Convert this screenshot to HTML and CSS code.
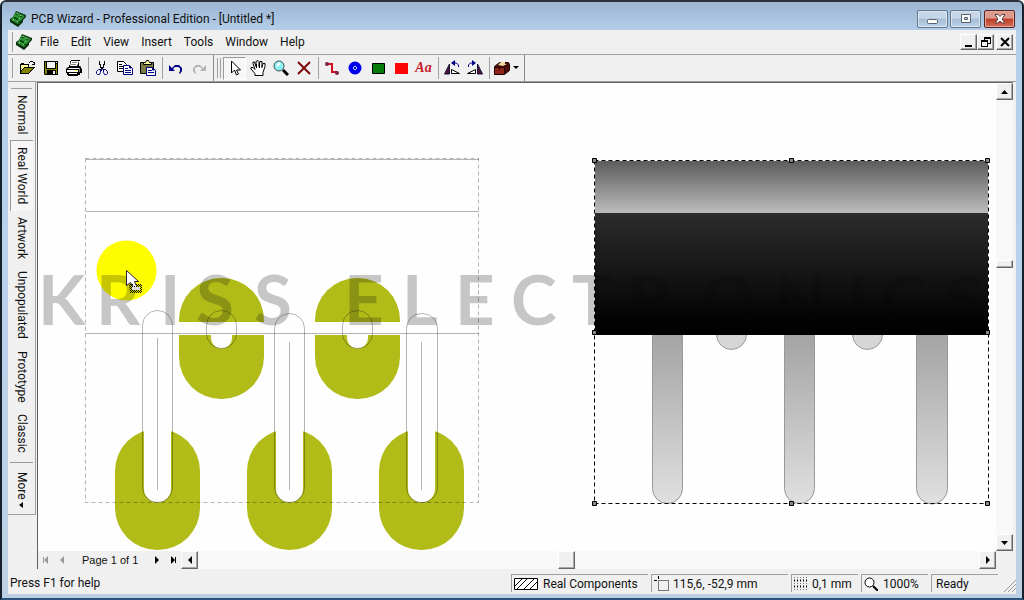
FILE: index.html
```html
<!DOCTYPE html>
<html lang="en">
<head>
<meta charset="utf-8">
<title>PCB Wizard - Professional Edition - [Untitled *]</title>
<link rel="stylesheet" href="styles.css">
</head>
<body>
<svg class="defs" aria-hidden="true">
  <symbol id="board" viewBox="0 0 16 16">
    <path fill="#0a300c" d="M6 0l10 4v2l-3 3v2l-5 5-8-5V8l3-2z"/>
    <path fill="#2c9236" d="M6 1l9 4-7 8-7-4z"/>
    <path fill="#0a4a10" d="M6 3h2v1H6zM4 6h2v1h2v2H6V8H4zM10 5h2v1h-2zM8 10h2v1H8z"/>
    <path fill="#9fd08c" d="M7 2h1v1H7zM10 4h1v1h-1zM3 8h1v1H3zM7 10h1v1H7zM9 7h1v1H9z"/>
  </symbol>
</svg>
<div class="window">
  <header class="titlebar">
    <svg class="icon" aria-hidden="true"><use href="#board"/></svg>
    <h1 class="title">PCB Wizard - Professional Edition - [Untitled *]</h1>
    <div class="caption-buttons">
      <button class="caption" aria-label="Minimize"><svg width="14" height="12"><rect x="1.5" y="6.500" width="10" height="4" rx="1" fill="#fff" stroke="#59636e"/></svg></button>
      <button class="caption" aria-label="Maximize"><svg width="14" height="12"><path fill="#fff" fill-rule="evenodd" stroke="#59636e" d="M2.500 1.500h9v8h-9zM5.500 4.500h3v2h-3z"/></svg></button>
      <button class="caption close" aria-label="Close"><svg width="14" height="12"><path fill="#fff" stroke="#57423f" d="M2 1.500h3l2 2 2-2h3L9 6l3 4H9L7 8l-2 2H2l3-4z"/></svg></button>
    </div>
  </header>

  <div class="client">
    <nav class="menubar">
      <span class="grip"></span>
      <svg class="icon" aria-hidden="true"><use href="#board"/></svg>
      <div class="menus">
        <button class="menu">File</button><button class="menu">Edit</button><button class="menu">View</button><button class="menu">Insert</button><button class="menu">Tools</button><button class="menu">Window</button><button class="menu">Help</button>
      </div>
      <div class="mdi-buttons">
        <button class="raised mdi" aria-label="Minimize document"><svg width="12" height="12"><path d="M2 9h7v2H2z"/></svg></button>
        <button class="raised mdi" aria-label="Restore document"><svg width="12" height="12"><path fill-rule="evenodd" d="M4 1h7v7H8v3H1V4h3zM5 3v1h3v3h2V3zM2 6v4h5V6z"/></svg></button>
        <button class="raised mdi last" aria-label="Close document"><svg width="12" height="12"><path fill="none" stroke="#000" stroke-width="2" d="M2 2l8 8M10 2l-8 8"/></svg></button>
      </div>
    </nav>

    <div class="toolbars">
      <div class="toolbar" role="toolbar" aria-label="Standard">
        <span class="grip"></span>
        <button class="tool" aria-label="Open"><svg class="icon"><path fill="#000" d="M0 4h1V3h3v1h5v3h6v1h-1v1h-1v1h-1v1h-1v1h-1v1h-1v1H0z"/><path fill="#ffff9c" d="M1 5h7v2H4v1H3v1H2v1H1z"/><path fill="#848200" d="M4 8h9v1h-1v1h-1v1h-1v1H9v1H1v-1l1-1v-1h1V9h1z"/><path fill="none" stroke="#000" d="M9 2.500h1M10 1.500h3M13 2.500h1M14.500 2v3M12 4.500h2"/></svg></button>
        <button class="tool" aria-label="Save"><svg class="icon"><path d="M1 1h14v14H2l-1-1z"/><path fill="#848200" d="M2 2h1v7h10V4h1v10H2z"/><path fill="#f4f4f4" d="M4 2h8v6H4zM10 11h2v3h-2z"/><path fill="#f4f4f4" d="M13 2h1v1h-1z"/><path d="M4 10h9v4h-1v-3h-2v3H4z"/></svg></button>
        <button class="tool" aria-label="Print"><svg class="icon"><path d="M5 0h9v1h-1v5h1l1 1v1l1 1v4h-2v2h-2v1H2v-1H1v-2H0V9l2-2h1V5h1V1h1z"/><path fill="#fff" d="M5 1h8L11 6H4zM3 8h10v1H2zM1 10h11v2H1zM3 13h8v1H3z"/><path fill="#848484" d="M6 2h5v1H6zM5 4h5v1H5zM13 8h1v4h-1z"/><path fill="#ff0" d="M9 10h2v1H9z"/></svg></button>
        <span class="sep"></span>
        <button class="tool" aria-label="Cut"><svg class="icon"><path fill="none" stroke="#000" d="M5.500 1v4M10.500 1v4M6.500 4v4M9.500 4v4M7.500 7v4M8.500 7v2"/><path fill="none" stroke="#000084" d="M7.500 9.500h-3l-2 2v2l1 1h2l1-2v-3M8.500 9.500h3l2 2v2l-1 1h-2l-1-2v-3"/></svg></button>
        <button class="tool" aria-label="Copy"><svg class="icon"><path fill="#fff" stroke="#000" d="M.5 1.500h6l3 3v7h-9z"/><path stroke="#000" d="M2 4.500h3M2 6.500h5M2 8.500h5"/><path fill="#fff" stroke="#000084" d="M6.500 5.500h6l3 3v6h-9z"/><path stroke="#000084" d="M8 8.500h3M8 10.500h6M8 12.500h6M12.500 6v2h2"/></svg></button>
        <button class="tool" aria-label="Paste"><svg class="icon"><path fill="#7c7b42" stroke="#000" d="M.5 2.500h13v11h-13z"/><path fill="#ffff9c" stroke="#000" d="M3.500 4.500v-2h2l1-2h2l1 2h2v2z"/><path fill="#fff" stroke="#000084" d="M6.500 7.500h6l3 3v5h-9z"/><path stroke="#000084" d="M8 10.500h4M8 12.500h6M12.500 8v2h2"/></svg></button>
        <span class="sep"></span>
        <button class="tool" aria-label="Undo"><svg class="icon"><path fill="#000084" d="M1 5v6h6L5 9l2-2h3l2 1v3l-1 2 1 1 2-3V8l-3-3H7L4 8z"/></svg></button>
        <button class="tool" aria-label="Redo" disabled><svg class="icon"><path fill="#b4b4b4" d="M15 5v6H9l2-2-2-2H6L4 8v3l1 2-1 1-2-3V8l3-3h4l3 3z"/></svg></button>
      </div>
      <div class="toolbar second" role="toolbar" aria-label="Drawing">
        <span class="grip double"></span>
        <button class="tool pressed" aria-label="Select"><svg class="icon"><path fill="#fff" stroke="#000" d="M4.500 1v12l3-3 2 5 2-1-2-4h4z"/></svg></button>
        <button class="tool" aria-label="Pan"><svg class="icon"><path fill="#fff" stroke="#000" d="M5 15.500v-2L1 9V7.500h2l2 2-2-6V2h1.500L6 6.500V1.500L8 .5l1 1v5l1-5h2v5l1-3h2v3l-2 6v3z"/><path stroke="#000" d="M6.500 4v4M9.500 4v4M12 5v3"/></svg></button>
        <button class="tool" aria-label="Zoom"><svg class="icon"><path stroke="#000" stroke-width="3" d="M10 10l5 5"/><circle cx="6" cy="6" r="5" fill="#8df2f4" stroke="#40525a"/><path stroke="#fff" stroke-width="2" d="M4 6l3-3"/></svg></button>
        <button class="tool" aria-label="Delete"><svg class="icon"><path fill="none" stroke="#780c0c" stroke-width="2" d="M2 2l12 12M14 2L2 14"/></svg></button>
        <span class="sep"></span>
        <button class="tool" aria-label="Track"><svg class="icon"><path fill="none" stroke="#d01020" stroke-width="2" d="M2 4h6v8h6"/><circle cx="3" cy="4" r="2" fill="#84204c"/><circle cx="13" cy="13" r="2" fill="#84204c"/></svg></button>
        <button class="tool" aria-label="Pad"><svg class="icon"><circle cx="8" cy="8" r="6.500" fill="#0000f0"/><path fill="#b8dcff" d="M7 6h2v1h1v2H9v1H7V9H6V7h1z"/><path fill="#0000a0" d="M7 7h2v2H7z"/></svg></button>
        <button class="tool" aria-label="Component"><svg class="icon"><path fill="#087a08" stroke="#000" d="M2.500 3.500h12v10h-12z"/></svg></button>
        <button class="tool" aria-label="Copper area"><svg class="icon"><path fill="#fa0606" d="M2 3h13v11H2z"/></svg></button>
        <button class="tool text-tool" aria-label="Text">Aa</button>
        <span class="sep"></span>
        <button class="tool" aria-label="Rotate left"><svg class="icon"><path fill="#54103c" stroke="#101030" d="M5.500 4v10H.5z"/><path fill="#fff" stroke="#000" d="M7.500 9.500v4h8z"/><path fill="none" stroke="#000084" d="M14.500 7V5l-2-2H8"/><path fill="#000084" d="M11 0v6L7 3z"/></svg></button>
        <button class="tool" aria-label="Rotate right"><svg class="icon"><path fill="#54103c" stroke="#101030" d="M10.500 4v10h5z"/><path fill="#fff" stroke="#000" d="M8.500 9.500v4h-8z"/><path fill="none" stroke="#000084" d="M1.500 7V5l2-2H8"/><path fill="#000084" d="M5 0v6l4-3z"/></svg></button>
        <span class="sep"></span>
        <button class="tool gallery" aria-label="Component gallery"><svg class="icon"><path fill="#4c0c0c" stroke="#200" d="M.5 6.500l5-4h9l1 2v6l-5 4H.5z"/><path fill="#8c2418" d="M1 8h9v6H1z"/><path fill="#f4d8a0" d="M4 5l3-3h4v2h2L9 6z"/><path fill="none" stroke="#200" d="M10.500 14V7l4-3M1 7.500h9M5.500 8v2"/></svg><svg width="6" height="4"><path d="M0 0h6L3 3z"/></svg></button>
      </div>
    </div>

    <div class="workspace">
      <nav class="views">
        <button class="view">Normal</button>
        <button class="view active">Real World</button>
        <button class="view">Artwork</button>
        <button class="view">Unpopulated</button>
        <button class="view">Prototype</button>
        <button class="view">Classic</button>
        <button class="view more">More<svg width="5" height="6"><path d="M4 0v6L0 3z"/></svg></button>
      </nav>
      <main class="document">
        <div class="canvas">
          <svg class="drawing" role="img" aria-label="Circuit layout and component view">
            <defs>
              <linearGradient id="metal" x2="0" y2="1"><stop stop-color="#5c5c5c"/><stop offset="1" stop-color="#bcbcbc"/></linearGradient>
              <linearGradient id="body" x2="0" y2="1"><stop stop-color="#2c2c2c"/><stop offset=".9" stop-color="#020202"/><stop offset="1" stop-color="#000"/></linearGradient>
              <linearGradient id="pin" x2="0" y2="1"><stop stop-color="#a2a2a2"/><stop offset="1" stop-color="#e0e0e0"/></linearGradient>
              <linearGradient id="ink" gradientUnits="userSpaceOnUse" x1="594" x2="595" y1="0" y2="0"><stop stop-opacity=".22"/><stop offset="1" stop-opacity=".16"/></linearGradient>
              <pattern id="dither" width="2" height="2" patternUnits="userSpaceOnUse"><path d="M0 0h1v1H0zM1 1h1v1H1z"/></pattern>
            </defs>
            <g transform="translate(-38 -83)">
              <g fill="#b1bc18">
                <rect x="179" y="278" width="85" height="121" rx="42"/>
                <rect x="315" y="278" width="85" height="121" rx="42"/>
                <rect x="115" y="429" width="85" height="121" rx="42"/>
                <rect x="247" y="429" width="85" height="121" rx="42"/>
                <rect x="379" y="429" width="85" height="121" rx="42"/>
              </g>
              <g fill="#fefefe">
                <path d="M178 322h88v13h-88zM314 322h88v13h-88z"/>
                <path d="M211 334h21v4a10.500 10.500 0 0 1-21 0zM347 334h21v4a10.500 10.500 0 0 1-21 0z"/>
                <path d="M144 428h27v61a13.500 13.500 0 0 1-27 0zM276 428h27v61a13.500 13.500 0 0 1-27 0zM408 428h27v61a13.500 13.500 0 0 1-27 0z"/>
              </g>
              <g fill="none" stroke="#000" stroke-opacity=".29">
                <rect x="142.500" y="310.500" width="30" height="192" rx="15"/>
                <rect x="274.500" y="313.500" width="30" height="189" rx="15"/>
                <rect x="406.500" y="313.500" width="31" height="189" rx="15"/>
                <rect x="206.500" y="310.500" width="30" height="38" rx="15"/>
                <rect x="342.500" y="310.500" width="30" height="38" rx="15"/>
                <path d="M157.500 338v152M289.500 342v148M421.500 342v148"/>
                <path d="M86 159.500h393M86 211.500h393M86 333.500h393"/>
                <path stroke-dasharray="4 3" d="M85.500 158.500h393v344h-393z"/>
              </g>
              <circle cx="126.500" cy="270.500" r="30" fill="#fdfd00"/>
              <g stroke="#999" fill="url(#pin)">
                <path d="M652.500 330v158.500a15 15 0 0 0 30 0V330zM784.500 330v158.500a15 15 0 0 0 30 0V330zM916.500 330v158.500a15 15 0 0 0 31 0V330z"/>
                <g fill="#d6d6d6"><circle cx="731.500" cy="334.500" r="15"/><circle cx="867.500" cy="334.500" r="15"/></g>
              </g>
              <rect x="595" y="161" width="393" height="52" fill="url(#metal)"/>
              <rect x="595" y="213" width="393" height="122" fill="url(#body)"/>
              <path fill="none" stroke="#fff" d="M594.500 160.500h394v174M594.500 335V160"/>
              <path fill="none" stroke="#000" stroke-dasharray="4 3" d="M594.500 160.500h394v343h-394z"/>
              <text class="watermark" y="325" x="38 96 160 196 254 344 402 455 511 572 627 701 774 848 881 946">KRISSELECTRONICS</text>
              <g fill="#888" stroke="#000">
                <path d="M592.500 158.500h4v4h-4zM789.500 158.500h4v4h-4zM985.500 158.500h4v4h-4zM592.500 330.500h4v4h-4zM985.500 330.500h4v4h-4zM592.500 501.500h4v4h-4zM789.500 501.500h4v4h-4zM985.500 501.500h4v4h-4z"/>
              </g>
              <path fill="#fff" stroke="#302038" d="M126.500 270.500v15l4-3 4 7 3-1-3-7h4z"/>
              <path fill="url(#dither)" d="M129 284h4v2h3v-2h6v9h-12z"/>
              <path fill="#ddd" d="M132 287h8v3h-8z"/>
            </g>
          </svg>
        </div>
        <div class="vscroll">
          <button class="raised arrow" aria-label="Scroll up"><svg width="8" height="4"><path d="M0 4h7L3.500 0z"/></svg></button>
          <span class="track"></span><span class="raised thumb"></span><span class="track low"></span>
          <button class="raised arrow" aria-label="Scroll down"><svg width="8" height="4"><path d="M0 0h7L3.500 4z"/></svg></button>
        </div>
        <div class="bottombar">
          <div class="pager">
            <button class="page-btn" aria-label="First page" disabled><svg width="8" height="8"><path d="M1 1h1v6H1zM6 0v8L2 4z"/></svg></button>
            <button class="page-btn" aria-label="Previous page" disabled><svg width="8" height="8"><path d="M6 0v8L2 4z"/></svg></button>
            <span class="page-label">Page 1 of 1</span>
            <button class="page-btn" aria-label="Next page"><svg width="8" height="8"><path d="M2 0v8l4-4z"/></svg></button>
            <button class="page-btn" aria-label="Last page"><svg width="8" height="8"><path d="M6 1h1v6H6zM2 0v8l4-4z"/></svg></button>
          </div>
          <div class="hscroll">
            <button class="raised arrow" aria-label="Scroll left"><svg width="8" height="8"><path d="M6 0v8L2 4z"/></svg></button>
            <span class="track left"></span><span class="raised thumb"></span><span class="track"></span>
            <button class="raised arrow" aria-label="Scroll right"><svg width="8" height="8"><path d="M2 0v8l4-4z"/></svg></button>
          </div>
        </div>
      </main>
    </div>

    <footer class="statusbar">
      <span class="help">Press F1 for help</span>
      <div class="panels">
        <span class="panel wide"><svg width="24" height="12"><path fill="#fff" stroke="#000" d="M.5.5h23v11H.5z"/><path stroke="#000" d="M1 8l7-7M3 11L13 1M10 11L20 1M16 11l7-7"/></svg>Real Components</span>
        <span class="panel wide coords"><svg width="16" height="16"><path fill="none" stroke="#000" stroke-dasharray="1 1" d="M4.500 4.500h10v10h-10z"/><path fill="none" stroke="#000" d="M4.500 0v3M0 4.500h3"/></svg>115,6, -52,9 mm</span>
        <span class="panel"><svg width="13" height="13"><path stroke="#000" stroke-dasharray="1 2" d="M0 .5h13M0 3.500h13M0 6.500h13M0 9.500h13M0 12.500h13"/><path stroke="#777" stroke-dasharray="1 1" d="M.5 0v13M3.500 0v13M6.500 0v13M9.500 0v13M12.500 0v13"/></svg>0,1 mm</span>
        <span class="panel"><svg width="14" height="14"><circle cx="5.500" cy="5.500" r="4.500" fill="#fff" stroke="#000"/><path stroke="#000" stroke-width="2" d="M9 9l5 5"/></svg>1000%</span>
        <span class="panel">Ready</span>
      </div>
      <svg class="resize" width="12" height="12" aria-hidden="true"><path stroke="#989898" stroke-width="1" d="M0 12L12 0M4 12l8-8M8 12l4-4"/></svg>
    </footer>
  </div>
</div>
</body>
</html>
```
FILE: styles.css
```css
* { box-sizing: border-box; }

body {
  margin: 0;
  font-family: Roboto, "Noto Sans", sans-serif;
  font-size: 12px;
  line-height: 16px;
  color: #111;
}

button {
  margin: 0;
  padding: 0;
  border: 0;
  background: none;
  font: inherit;
  color: inherit;
}

svg { display: block; flex: none; }
.defs { width: 0; height: 0; position: absolute; }
.icon { width: 16px; height: 16px; }

/* Window frame */
.window {
  min-height: 100vh;
  display: flex;
  flex-direction: column;
  padding: 0 6px 4px;
  background: linear-gradient(#9cb5d3, #b6cfe9 30px, #b9d1ea 60%, #bdd0e2);
  border: 2px solid #15202c;
  border-top-color: #2f2f3a;
  border-bottom-color: #2d527c;
  border-radius: 6px 6px 0 0;
}

.titlebar {
  height: 28px;
  display: flex;
  align-items: center;
  gap: 5px;
  padding: 5px 0 0 2px;
}

.title {
  flex: 1;
  margin: 0;
  font-size: 12px;
  font-weight: 400;
}

.caption-buttons { display: flex; gap: 2px; padding-right: 1px; }

.caption {
  width: 31px;
  height: 18px;
  display: grid;
  place-items: center;
  border: 1px solid #62788f;
  border-radius: 2px;
  background: linear-gradient(#c6d6e8 45%, #a5bcd5 50%, #bed2e7);
  box-shadow: inset 0 0 0 1px #dbe6f2;
}

.caption.close {
  margin-left: 1px;
  border-color: #5a2420;
  background: linear-gradient(#dc9a8c 45%, #bf3b26 50%, #d2705a);
  box-shadow: inset 0 0 0 1px #e5a79b;
}

.client {
  flex: 1;
  display: flex;
  flex-direction: column;
  background: #f0f0f0;
}

/* Menu and toolbars */
.menubar {
  height: 25px;
  display: flex;
  align-items: center;
  padding: 0 3px 0 3px;
  border-bottom: 1px solid #a0a0a0;
}

.grip {
  width: 2px;
  height: 20px;
  margin-right: 3px;
  border-right: 1px solid #a0a0a0;
}

.grip.double {
  width: 4px;
  margin-right: 2px;
  border-left: 1px solid #a0a0a0;
}

.menus { flex: 1; display: flex; padding-left: 2px; }
.menu { padding: 0 6px; }
.mdi-buttons { display: flex; }

.raised {
  border: 1px solid;
  border-color: #fff #666 #666 #fff;
  box-shadow: inset -1px -1px 0 #a8a8a8;
  background: #f0f0f0;
}

.mdi {
  width: 17px;
  height: 16px;
  display: grid;
  place-items: center;
}

.mdi.last { margin-left: 2px; }

.toolbars { display: flex; height: 26px; }

.toolbar {
  display: flex;
  align-items: center;
  padding: 0 3px;
}

.toolbar.second {
  border-left: 1px solid #888;
  border-right: 1px solid #888;
}

.tool {
  width: 23px;
  height: 23px;
  display: grid;
  place-items: center;
}

.tool.pressed {
  border: 1px solid;
  border-color: #999 #fff #fff #999;
  background: #f7f7f7;
}

.sep {
  width: 4px;
  height: 22px;
  border-right: 1px solid #a0a0a0;
  margin-right: 1px;
}

.text-tool {
  font: italic bold 14px/16px "Liberation Serif", serif;
  color: #c81c28;
}

.tool.gallery {
  width: 30px;
  display: flex;
  align-items: center;
  justify-content: center;
  gap: 3px;
}

/* Work area */
.workspace {
  flex: 1;
  display: flex;
  padding-right: 3px;
  border-top: 1px solid #a0a0a0;
}

.views {
  width: 28px;
  display: flex;
  flex-direction: column;
  align-self: flex-start;
  padding-top: 1px;
  border-right: 1px solid #a0a0a0;
  border-bottom: 1px solid #a0a0a0;
}

.views::before {
  content: "";
  height: 5px;
  margin: 0 3px;
  border-bottom: 1px solid #a0a0a0;
}

.view {
  writing-mode: vertical-rl;
  margin: 0 2px;
  padding: 6px 3px;
  border: 0 solid #999;
  line-height: 16px;
  text-align: left;
}

.view.active { border-width: 1px 0 0 1px; background: #f6f6f6; }
.view.more {
  display: flex;
  align-items: center;
  gap: 2px;
  padding-top: 9px;
  border-top-width: 1px;
  margin-top: 3px;
}

.document {
  flex: 1;
  min-width: 0;
  display: grid;
  grid-template: minmax(0, 1fr) 18px / minmax(0, 1fr) 17px;
  margin-left: 1px;
  border: solid #606060;
  border-width: 1px 0 0 1px;
}

.canvas { background: #fefefe; overflow: hidden; }
.drawing { width: 100%; height: 100%; }

.watermark {
  font: 700 69px Lato, "Open Sans", sans-serif;
  fill: url(#ink);
}

.track { flex: 1; background: repeating-conic-gradient(#f4f4f4 0 25%, #fcfcfc 0 50%) 0 0 / 2px 2px; }
.arrow { display: grid; place-items: center; width: 17px; height: 17px; }
.vscroll { display: flex; flex-direction: column; }
.vscroll .thumb { height: 8px; }
.vscroll .track { flex: 160; }
.vscroll .track.low { flex: 267; }

.bottombar { display: flex; }
.pager { display: flex; align-items: center; }
.page-btn { width: 16px; height: 16px; display: grid; place-items: center; }
.page-btn:disabled { fill: #999; }
.page-label { padding: 0 11px 0 12px; font: 11px/16px "Liberation Sans", sans-serif; }

.hscroll { flex: 1; display: flex; }
.hscroll .thumb { width: 17px; }
.hscroll .track { flex: 404; }
.hscroll .track.left { flex: 360; }
.hscroll .arrow, .hscroll .thumb { height: 18px; }

/* Status bar */
.statusbar {
  display: flex;
  align-items: flex-end;
  padding: 5px 0 2px 2px;
}

.help { flex: 1; line-height: 18px; }
.panels { display: flex; gap: 3px; }

.panel {
  width: 67px;
  height: 18px;
  display: flex;
  align-items: center;
  gap: 5px;
  padding-left: 2px;
  border: solid #a0a0a0;
  border-width: 1px 0 0 1px;
  white-space: nowrap;
}

.panel:last-child { padding-left: 4px; }
.panel.wide { width: 137px; }
.panel.coords { gap: 3px; }
.resize { margin-left: 6px; }
```
